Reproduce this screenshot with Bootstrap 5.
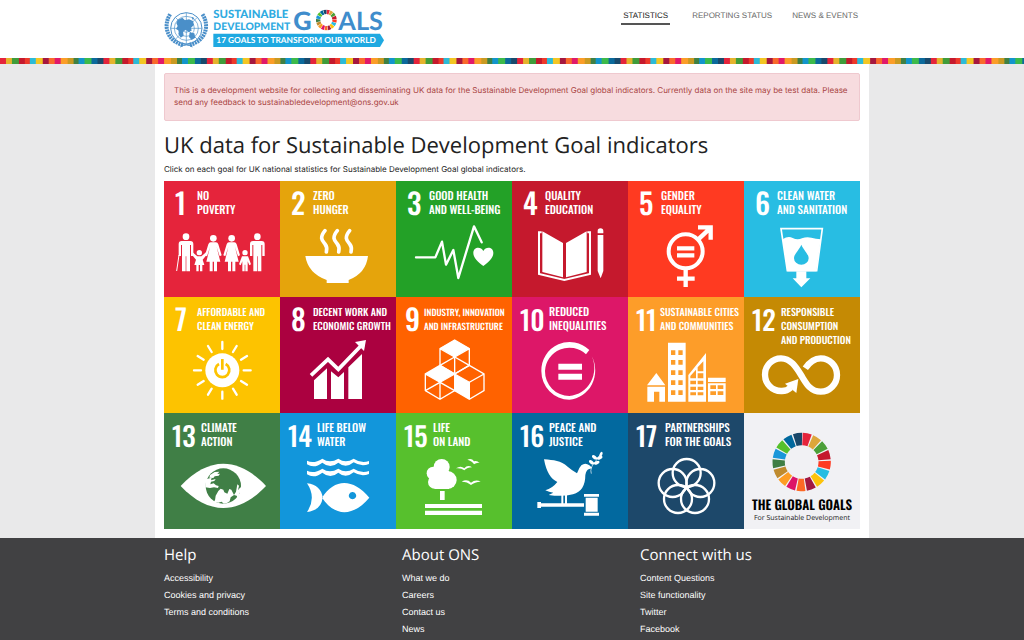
<!DOCTYPE html>
<html lang="en">
<head>
<meta charset="utf-8">
<meta name="viewport" content="width=device-width, initial-scale=1">
<title>UK data for Sustainable Development Goal indicators</title>
<link href="https://cdn.jsdelivr.net/npm/bootstrap@5.3.0/dist/css/bootstrap.min.css" rel="stylesheet">
<style>
  body { font-family: Inter, Roboto, sans-serif; font-size: 8px; line-height: 12px; color: #222; background: #e9e9ea; text-rendering: geometricPrecision; }
  .page-wrap { width: 100%; max-width: 714px; margin: 0 auto; padding-left: 9px; padding-right: 9px; }
  .site-head { min-height: 58px; }
  .brand-art { display: block; width: 221px; height: 42px; overflow: visible; }
  .main-links { font-family: "Liberation Sans", Arial, sans-serif; gap: 16px; }
  .main-links a { font-size: 8px; line-height: 12px; color: #666; padding: 2px 2px 1px; border-bottom: 2px solid transparent; text-decoration: none; }
  .main-links a.active { color: #222; border-color: #555; }
  .goal-stripe { height: 6px; background: linear-gradient(90deg,
      #e5243b 0 6%, #e5b32c 6% 12%, #3f9c3a 12% 18%, #c5192d 18% 24%, #ee3a2a 24% 29%, #2bbbd8 29% 35%,
      #f3c623 35% 41%, #a5173f 41% 47%, #f96a2b 47% 53%, #e0196b 53% 59%, #fb9d28 59% 65%, #c99a22 65% 71%,
      #3f8044 71% 76%, #1295cc 76% 82%, #3dba4a 82% 88%, #0b6a9c 88% 94%, #194a6c 94% 100%) 0 0 / 10.1% 100%; }
  .main-area { padding-top: 9px; padding-bottom: 9px; }
  .dev-note { background: #f7dcdf; border: 1px solid #efc9cf; border-radius: 2px; color: #a94442; padding: 10px 9px 12px; margin: 0 0 10px; min-height: 47px; }
  h1 { font-family: "Open Sans", sans-serif; font-weight: 400; font-size: 22px; line-height: 28px; color: #222; margin: 0 0 4px; }
  .lede { margin: 0 0 6px; }
  .goal-grid { display: grid; grid-template-columns: repeat(6, minmax(0, 1fr)); }
  .goal { display: block; aspect-ratio: 1; color: #fff; text-decoration: none; font-family: Oswald, "Liberation Sans", sans-serif; font-weight: 500; white-space: nowrap; }
  .goal:hover { color: #fff; }
  .goal-top { display: grid; grid-template-columns: 22px 1fr; height: 36px; padding: 8px 0 0 11px; }
  .goal-top.wide { grid-template-columns: 29px 1fr; padding-left: 8px; }
  .goal-top.tight { grid-template-columns: 19px 1fr; padding-left: 9px; }
  .goal-no { font-size: 29px; line-height: 28px; }
  .wide .goal-no { font-size: 27px; }
  .goal-top.eleven { grid-template-columns: 24px 1fr; }
  .goal-name { font-size: 11px; line-height: 14px; }
  .goal-name.long { font-size: 10px; }
  .tight .goal-name { font-size: 9px; }
  .goal svg { display: block; width: 100%; aspect-ratio: 116 / 80; fill: #fff; }
  .goal .ln { fill: none; stroke: #fff; }
  .global { background: #f1f1f4; color: #000; text-align: center; }
  .global:hover { color: #000; }
  .goal.global svg { aspect-ratio: 116 / 82; }
  .global-name { font-size: 13px; line-height: 19px; font-weight: 600; }
  .global-sub { font-family: "Open Sans", sans-serif; font-weight: 400; font-size: 7px; line-height: 10px; color: #222; }
  .site-foot { background: #414143; color: #fff; padding: 8px 0 6px; }
  .site-foot h2 { font-family: "Open Sans", sans-serif; font-weight: 400; font-size: 15px; line-height: 18px; margin: 0 0 6px; }
  .site-foot a { font-family: "Liberation Sans", Arial, sans-serif; font-size: 9px; line-height: 17px; color: #fff; text-decoration: none; }
  .foot-cols { display: grid; grid-template-columns: 238px 238px 1fr; }
</style>
</head>
<body class="d-flex flex-column min-vh-100">
<svg width="0" height="0" class="position-absolute" aria-hidden="true">
  <defs>
    <symbol id="wheel" viewBox="-90 -90 180 180">
      <g fill="none" stroke-width="37" stroke-dasharray=".86 16.14" transform="rotate(-88)">
        <circle r="69" pathLength="17" stroke="#e5243b"/>
        <circle r="69" pathLength="17" stroke="#dda63a" stroke-dashoffset="-1"/>
        <circle r="69" pathLength="17" stroke="#4c9f38" stroke-dashoffset="-2"/>
        <circle r="69" pathLength="17" stroke="#c5192d" stroke-dashoffset="-3"/>
        <circle r="69" pathLength="17" stroke="#ff3a21" stroke-dashoffset="-4"/>
        <circle r="69" pathLength="17" stroke="#26bde2" stroke-dashoffset="-5"/>
        <circle r="69" pathLength="17" stroke="#fcc30b" stroke-dashoffset="-6"/>
        <circle r="69" pathLength="17" stroke="#a21942" stroke-dashoffset="-7"/>
        <circle r="69" pathLength="17" stroke="#fd6925" stroke-dashoffset="-8"/>
        <circle r="69" pathLength="17" stroke="#dd1367" stroke-dashoffset="-9"/>
        <circle r="69" pathLength="17" stroke="#fd9d24" stroke-dashoffset="-10"/>
        <circle r="69" pathLength="17" stroke="#bf8b2e" stroke-dashoffset="-11"/>
        <circle r="69" pathLength="17" stroke="#3f7e44" stroke-dashoffset="-12"/>
        <circle r="69" pathLength="17" stroke="#1a97d9" stroke-dashoffset="-13"/>
        <circle r="69" pathLength="17" stroke="#56c02b" stroke-dashoffset="-14"/>
        <circle r="69" pathLength="17" stroke="#00689d" stroke-dashoffset="-15"/>
        <circle r="69" pathLength="17" stroke="#19486a" stroke-dashoffset="-16"/>
      </g>
    </symbol>
    <g id="man"><circle cy="173" r="10"/><path d="M-13 186h26q9 0 9 9v36h-7v-33h-3v79h-11v-45h-2v45h-11v-79h-3v33h-7v-36q0-9 9-9z"/></g>
    <g id="woman"><circle cy="178" r="10"/><path d="M-8 190h16q5 0 7 6l10 33-6 3-9-28 11 44h-10v29h-9v-29h-4v29h-9v-29h-10l11-44-9 28-6-3 10-33q2-6 7-6z"/></g>
    <g id="cube"><path d="M0-51 44-25V25L0 51-44 25V-25zM-44-25 0 0 44-25M0 0V51"/></g>
    <g id="leaf2"><ellipse cx="-9" cy="0" rx="9" ry="5" transform="rotate(35)"/><ellipse cx="9" cy="0" rx="9" ry="5" transform="rotate(-25)"/></g>
  </defs>
</svg>

<header class="bg-white site-head">
  <div class="page-wrap d-flex justify-content-between align-items-start pt-2">
    <a href="#" aria-label="Sustainable Development Goals home">
      <svg class="brand-art" viewBox="27 24 663 126" role="img">
        <g fill="none" stroke="#4a8fc9" stroke-width="2">
          <circle cx="94" cy="85" r="12"/><circle cx="94" cy="85" r="24"/><circle cx="94" cy="85" r="36"/><circle cx="94" cy="85" r="47" stroke-width="3"/>
          <path d="M94 38v94M47 85h94M61 52l66 66M127 52l-66 66"/>
          <path stroke-width="12" stroke-dasharray="6 2" d="M84 134C42 126 20 82 46 42M104 134C146 126 168 82 142 42"/>
          <path stroke-width="3" d="M76 141q18-12 36-3M112 141q-18-12-36-3"/>
        </g>
        <path fill="#4a8fc9" d="M68 60l14-7 8 8 12-3 12 5 3 12-9 8 2 9-10 4-7-7-9 5 2 13-9 6-7-11 2-10-9-5 5-9-4-8zM104 97l14 3 3 13-11 7-8-9zM110 50l8 4-5 6z"/>
        <g font-family="Lato, sans-serif" font-weight="900" fill="#2fabe1">
          <text x="175" y="55" font-size="34">SUSTAINABLE</text>
          <text x="175" y="91" font-size="31">DEVELOPMENT</text>
          <text x="415" y="90" font-size="76" fill="#3f8dcc">G</text>
          <text x="550" y="90" font-size="76" fill="#3f8dcc" font-weight="700">ALS</text>
        </g>
        <use href="#wheel" x="482" y="28" width="64" height="64"/>
        <path fill="#1fa9e1" d="M175 101h500l12 20-12 20H175z"/>
        <text x="184" y="130" font-size="25" font-family="Lato, sans-serif" font-weight="700" fill="#fff">17 GOALS TO TRANSFORM OUR WORLD</text>
      </svg>
    </a>
    <nav class="main-links d-flex" aria-label="Main">
      <a class="active" href="#" aria-current="page">STATISTICS</a>
      <a href="#" class="ms-1">REPORTING STATUS</a>
      <a href="#">NEWS &amp; EVENTS</a>
    </nav>
  </div>
</header>
<div class="goal-stripe"></div>

<main class="page-wrap main-area bg-white">
  <p class="dev-note">This is a development website for collecting and disseminating UK data for the Sustainable Development Goal global indicators. Currently data on the site may be test data. Please send any feedback to sustainabledevelopment@ons.gov.uk</p>
  <h1>UK data for Sustainable Development Goal indicators</h1>
  <p class="lede">Click on each goal for UK national statistics for Sustainable Development Goal global indicators.</p>

  <div class="goal-grid">
    <a class="goal" href="#" style="background:#e5243b">
      <div class="goal-top"><span class="goal-no">1</span><span class="goal-name">NO<br>POVERTY</span></div>
      <svg viewBox="12 114 348 240" aria-hidden="true">
        <use href="#man" x="78"/><use href="#woman" x="160"/><use href="#woman" x="215"/><use href="#man" x="292"/>
        <path d="M57 228l-7 48" stroke="#fff" stroke-width="3"/>
        <circle cx="118" cy="221" r="8"/><path d="M98 220l14 12h12l14-12 4 5-14 17 5 16h-6v19h-7v-19h-4v19h-7v-19h-6l5-16-14-17z"/>
        <circle cx="255" cy="221" r="8"/><path d="M246 232h18l9 24-5 3-5-12v30h-7v-20h-2v20h-7v-30l-5 12-5-3z"/>
      </svg>
    </a>
    <a class="goal" href="#" style="background:#e5a40c">
      <div class="goal-top"><span class="goal-no">2</span><span class="goal-name">ZERO<br>HUNGER</span></div>
      <svg viewBox="360 114 348 240" aria-hidden="true">
        <path d="M436 231h188q-6 52-58 72v9h-66v-9q-56-20-64-72z"/>
        <path class="ln" stroke-width="11" stroke-linecap="round" d="M495 155c-18 22-8 30 0 40s6 16 4 24M532 155c-18 22-8 30 0 40s6 16 4 24M569 155c-18 22-8 30 0 40s6 16 4 24"/>
      </svg>
    </a>
    <a class="goal" href="#" style="background:#23a127">
      <div class="goal-top"><span class="goal-no">3</span><span class="goal-name">GOOD HEALTH<br>AND WELL-BEING</span></div>
      <svg viewBox="6 114 348 240" aria-hidden="true">
        <path class="ln" stroke-width="7" stroke-linecap="round" stroke-linejoin="round" d="M66 235h58l20-47 12 69 22-44 15 84 47-155 23 48"/>
        <path d="M268 261C250 247 238 236 238 222c0-18 22-21 30-6 8-15 30-12 30 6 0 14-12 25-30 39z"/>
      </svg>
    </a>
    <a class="goal" href="#" style="background:#c5192d">
      <div class="goal-top"><span class="goal-no">4</span><span class="goal-name">QUALITY<br>EDUCATION</span></div>
      <svg viewBox="354 114 348 240" aria-hidden="true">
        <path class="ln" stroke-width="6" d="M443 160h-8v125l76 18 77-18V160h-8"/>
        <path d="M445 157l62 35v103l-62-16zM578 157l-62 35v103l62-16zM611 168h17v108l-8 22-9-22zM611 163v-7a8 8 0 0 1 17 0v7z"/>
      </svg>
    </a>
    <a class="goal" href="#" style="background:#ff3a21">
      <div class="goal-top"><span class="goal-no">5</span><span class="goal-name">GENDER<br>EQUALITY</span></div>
      <svg viewBox="6 114 348 240" aria-hidden="true">
        <circle class="ln" stroke-width="12" cx="179" cy="217" r="51"/>
        <path class="ln" stroke-width="13" d="M153 208h52M153 229h52M179 268v56M153 299h53M216 182l36-34M216 145h38v37"/>
      </svg>
    </a>
    <a class="goal" href="#" style="background:#28bde3">
      <div class="goal-top"><span class="goal-no">6</span><span class="goal-name">CLEAN WATER<br>AND SANITATION</span></div>
      <svg viewBox="354 114 348 240" aria-hidden="true">
        <path class="ln" stroke-width="5" d="M465 149h124l-17 126h-88z"/>
        <path d="M470 181q16-11 30-4t28 1 28-2 28 5l-13 96h-87z"/>
        <path fill="#28bde3" d="M526 197c9 20 22 28 22 41a22 19 0 0 1-44 0c0-13 13-21 22-41z"/>
        <path d="M511 277h30v21h12l-27 27-26-27h11z"/>
      </svg>
    </a>

    <a class="goal" href="#" style="background:#fdc300">
      <div class="goal-top"><span class="goal-no">7</span><span class="goal-name long">AFFORDABLE AND<br>CLEAN ENERGY</span></div>
      <svg viewBox="12 114 348 240" aria-hidden="true">
        <circle cx="187" cy="226" r="51"/>
        <path fill="none" stroke="#fdc300" stroke-width="8" d="M177 207a21 21 0 1 0 20 0M187 192v32"/>
        <path class="ln" stroke-width="7" stroke-linecap="round" d="M187 141v21M187 290v21M102 226h21M251 226h21M144 153l11 18M219 281l11 18M230 153l-11 18M155 281l-11 18M113 183l18 11M243 258l18 11M261 183l-18 11M131 258l-18 11"/>
      </svg>
    </a>
    <a class="goal" href="#" style="background:#ab0140">
      <div class="goal-top"><span class="goal-no">8</span><span class="goal-name long">DECENT WORK AND<br>ECONOMIC GROWTH</span></div>
      <svg viewBox="360 114 348 240" aria-hidden="true">
        <path d="M462 256l39-36v92h-39zM513 229l22 18 17-16v81h-39zM565 217l41-40v135h-41z"/>
        <path class="ln" stroke-width="11" d="M453 241l51-48 31 30 68-71"/><path d="M618 135l-6 33-27-27z"/>
      </svg>
    </a>
    <a class="goal" href="#" style="background:#ff6200">
      <div class="goal-top tight"><span class="goal-no">9</span><span class="goal-name">INDUSTRY, INNOVATION<br>AND INFRASTRUCTURE</span></div>
      <svg viewBox="6 114 348 240" aria-hidden="true">
        <g class="ln" stroke-width="4"><use href="#cube" x="182" y="186"/><use href="#cube" x="138" y="262"/><use href="#cube" x="226" y="262"/><path d="M138 211l44-25 44 25M94 287l44-25 44 25"/></g>
        <path d="M182 135l44 25-44 26-44-26zM138 211l44 26-44 25-44-25zM182 237l44 25v51l-44-26z"/>
      </svg>
    </a>
    <a class="goal" href="#" style="background:#dd1768">
      <div class="goal-top wide"><span class="goal-no">10</span><span class="goal-name">REDUCED<br>INEQUALITIES</span></div>
      <svg viewBox="354 114 348 240" aria-hidden="true">
        <path d="M586 165A85 86 0 0 0 442 228A85 86 0 0 0 526 314A83 88 0 0 0 593 183A82 84 0 0 1 526 303A73 74 0 0 1 453 228A73 73 0 0 1 576 178zM493 206h71v18h-71zM493 236h71v18h-71z"/>
      </svg>
    </a>
    <a class="goal" href="#" style="background:#fd9d29">
      <div class="goal-top wide eleven"><span class="goal-no">11</span><span class="goal-name long">SUSTAINABLE CITIES<br>AND COMMUNITIES</span></div>
      <svg viewBox="6 114 348 240" aria-hidden="true">
        <path fill-rule="evenodd" d="M63 271l28-37 27 37zM64 275h53v45h-17v-30h-16v30h-20zM126 143h53v177h-53zM135 166v14h13v-14zM157 166v14h13v-14zM135 195v14h13v-14zM157 195v14h13v-14zM135 226v14h13v-14zM157 226v14h13v-14zM135 256v14h13v-14zM157 256v14h13v-14zM135 286v14h13v-14zM157 286v14h13v-14zM187 240l53-66v146h-53zM193 243v7h17v-26zM215 217v12h17v-30zM215 235v15h17v-15zM193 257v11h17v-11zM215 257v11h17v-11zM193 275v10h17v-10zM215 275v10h17v-10zM193 292v9h17v-9zM215 292v9h17v-9zM246 248h53v13h-53zM246 265h53v55h-53zM253 271v11h17v-11zM275 271v11h17v-11zM253 289v11h17v-11zM275 289v11h17v-11z"/>
      </svg>
    </a>
    <a class="goal" href="#" style="background:#c58a04">
      <div class="goal-top wide"><span class="goal-no">12</span><span class="goal-name long">RESPONSIBLE<br>CONSUMPTION<br>AND PRODUCTION</span></div>
      <svg viewBox="354 114 348 240" aria-hidden="true">
        <path class="ln" stroke-width="19" d="M538 220C550 202 564 190 584 190A49 50 0 0 1 584 290C552 290 540 264 525 240S494 190 465 190A48 49 0 0 0 465 288Q482 289 494 278"/>
        <path d="M517 252l-6 42-34-28z"/>
      </svg>
    </a>

    <a class="goal" href="#" style="background:#407f46">
      <div class="goal-top wide"><span class="goal-no">13</span><span class="goal-name">CLIMATE<br>ACTION</span></div>
      <svg viewBox="12 114 348 240" aria-hidden="true">
        <path d="M62 225C145 136 235 136 318 225C235 313 145 313 62 225z"/>
        <circle cx="190" cy="225" r="53" fill="#407f46"/>
        <path d="M137 205l18-5-2 8 14-4-4 6-10 2-2 8 10-3 7 6 8 2-2 6-12-2-12 2-14-2zM150 192l14-9 14-1-6 7 8-1-4 6-12 2-4 5-12-1zM175 240l7-7 8 3 3 8 9 4 6-14 6 2 8 16 6-10 4-22 5 4-3 14 6-8 6-2-2 16-6 2-4 18-4-10-8-2-10 7-3 12-8 5-10 2-6-6-10 3-12-3-8 6 4 8-18-10 8-6 8 6 8-8 2-14z" fill="#fff"/>
      </svg>
    </a>
    <a class="goal" href="#" style="background:#1296db">
      <div class="goal-top wide"><span class="goal-no">14</span><span class="goal-name">LIFE BELOW<br>WATER</span></div>
      <svg viewBox="360 114 348 240" aria-hidden="true">
        <g id="waves"><path d="M441 149q20 11 46-6 22 15 48 0 22 15 46 0 22 15 46 7v9q-24 9-46-5-24 20-46 1-24 20-48 0-24 19-46 5z"/></g>
        <use href="#waves" y="30"/>
        <path fill-rule="evenodd" d="M486 260C524 200 580 202 628 260C580 318 524 318 486 260zM441 217q42 5 47 43-5 38-47 43 29-43 0-86zM577 243a11 11 0 1 0 1 0z"/>
      </svg>
    </a>
    <a class="goal" href="#" style="background:#57c02d">
      <div class="goal-top wide"><span class="goal-no">15</span><span class="goal-name">LIFE<br>ON LAND</span></div>
      <svg viewBox="6 114 348 240" aria-hidden="true">
        <circle cx="143" cy="168" r="24"/><circle cx="118" cy="187" r="20"/><circle cx="122" cy="213" r="20"/><circle cx="161" cy="207" r="27"/><path d="M120 180h45v54h-43zM138 240h14v27h-14zM93 279h171v12H93zM93 299h171v13H93z"/>
        <path d="M186 172q14-9 25 0 10-12 23-3-14 0-23 9-10-8-25-6zM220 146q13-6 20 5 8-4 17 5-9-2-17 4-6-11-20-14zM203 212q16-10 28 3 14-12 29-3-18 1-29 10-11-10-28-10z"/>
      </svg>
    </a>
    <a class="goal" href="#" style="background:#02699f">
      <div class="goal-top wide"><span class="goal-no">16</span><span class="goal-name">PEACE AND<br>JUSTICE</span></div>
      <svg viewBox="354 114 348 240" aria-hidden="true">
        <path d="M450 145C480 148 500 148 521 167Q534 178 549 187Q555 170 562 163Q574 154 586 163L595 171 586 174Q577 176 574 192Q574 240 537 250Q505 258 464 252L478 245Q465 243 454 238Q475 232 490 213Q460 200 450 145z"/>
        <path d="M502 252h6v25h-6zM513 252h6v25h-6zM440 277h130v10h-130zM430 273h11v18h-11zM575 260h36v42h-36zM570 249h45v8h-45zM570 305h45v9h-45z"/>
        <path class="ln" stroke-width="2" d="M592 188q-6-18 12-36l18-26"/>
        <use href="#leaf2" x="600" y="159"/><use href="#leaf2" x="609" y="144"/><ellipse cx="621" cy="130" rx="4" ry="8" transform="rotate(25 621 130)"/>
      </svg>
    </a>
    <a class="goal" href="#" style="background:#1d486a">
      <div class="goal-top wide"><span class="goal-no">17</span><span class="goal-name">PARTNERSHIPS<br>FOR THE GOALS</span></div>
      <svg viewBox="6 114 348 240" aria-hidden="true">
        <g class="ln" stroke-width="7"><circle cx="182" cy="186" r="42"/><circle cx="223" cy="216" r="42"/><circle cx="207" cy="264" r="42"/><circle cx="156" cy="264" r="42"/><circle cx="140" cy="216" r="42"/></g>
      </svg>
    </a>
    <a class="goal global" href="#">
      <svg viewBox="354 0 348 246" aria-hidden="true"><use href="#wheel" x="437" y="57" width="180" height="180"/></svg>
      <div class="global-name">THE GLOBAL GOALS</div>
      <div class="global-sub">For Sustainable Development</div>
    </a>
  </div>
</main>

<footer class="site-foot flex-grow-1">
  <div class="page-wrap foot-cols">
    <section><h2>Help</h2>
      <ul class="list-unstyled mb-0"><li><a href="#">Accessibility</a></li><li><a href="#">Cookies and privacy</a></li><li><a href="#">Terms and conditions</a></li></ul></section>
    <section><h2>About ONS</h2>
      <ul class="list-unstyled mb-0"><li><a href="#">What we do</a></li><li><a href="#">Careers</a></li><li><a href="#">Contact us</a></li><li><a href="#">News</a></li></ul></section>
    <section><h2>Connect with us</h2>
      <ul class="list-unstyled mb-0"><li><a href="#">Content Questions</a></li><li><a href="#">Site functionality</a></li><li><a href="#">Twitter</a></li><li><a href="#">Facebook</a></li></ul></section>
  </div>
</footer>
<script src="https://cdn.jsdelivr.net/npm/bootstrap@5.3.0/dist/js/bootstrap.bundle.min.js"></script>
</body>
</html>
